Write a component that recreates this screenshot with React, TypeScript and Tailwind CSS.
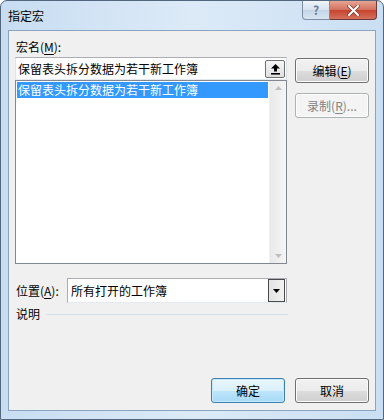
import React from 'react'

const font = { fontFamily: '"Noto Sans CJK SC", "Liberation Sans", sans-serif' }

function Btn({ children, primary, disabled }: { children: React.ReactNode; primary?: boolean; disabled?: boolean }) {
  const border = disabled ? 'border-[#adb2b5]' : primary ? 'border-[#3c7fb1]' : 'border-[#707070]'
  const bg = disabled
    ? 'bg-[#f4f4f4]'
    : primary
      ? 'bg-[linear-gradient(#eaf6fd_0%,#d9f0fc_50%,#bee6fd_50%,#a7d9f5_100%)]'
      : 'bg-[linear-gradient(#f2f2f2_0%,#ebebeb_50%,#dddddd_50%,#cfcfcf_100%)]'
  return (
    <div
      className={`flex h-[25px] w-[74px] items-center justify-center rounded-[3px] border text-[12px] ${border} ${bg} ${
        disabled ? 'text-[#838383]' : 'text-black'
      } ${primary ? 'shadow-[inset_0_0_0_1px_#c6e9fb]' : 'shadow-[inset_0_0_0_1px_#fcfcfc]'}`}
    >
      {children}
    </div>
  )
}

function U({ children }: { children: React.ReactNode }) {
  return <span className="underline underline-offset-2">{children}</span>
}

export default function App() {
  return (
    <div className="w-[384px] h-[420px] bg-white" style={font}>
      <div className="relative flex h-[420px] w-[384px] flex-col rounded-t-[7px] border border-[#52667d] bg-[linear-gradient(90deg,#c8ddf2,#dceaf7_50%,#cadff3)]">
        {/* title bar */}
        <div className="flex h-[29px] items-start justify-between pl-[7px] pr-[6px]">
          <span className="mt-[8px] text-[12px] leading-[14px] text-black">指定宏</span>
          <div className="flex">
            <div className="flex h-[19px] w-[28px] items-center justify-center rounded-bl-[4px] border border-t-0 border-[#7d8ea3] bg-[linear-gradient(#eef4fa,#d6e2ef_50%,#c5d5e6_50%,#d7e4f1)] text-[12px] font-bold leading-none text-[#6a7b8f]">
              ?
            </div>
            <div className="flex h-[19px] w-[47px] items-center justify-center rounded-br-[4px] border border-l-0 border-t-0 border-[#6d3a3a] bg-[linear-gradient(#e8a493,#d2705c_50%,#c7432b_50%,#d4715e)]">
              <svg width="13" height="11" viewBox="0 0 13 11">
                <path d="M2 1 L11 10 M11 1 L2 10" stroke="#7a3a30" strokeWidth="3.4" strokeLinecap="square" />
                <path d="M2 1 L11 10 M11 1 L2 10" stroke="#ffffff" strokeWidth="2" strokeLinecap="square" />
              </svg>
            </div>
          </div>
        </div>

        {/* client area */}
        <div className="mx-[7px] flex h-[381px] flex-col border border-[#8aa3bf] bg-[#f0f0f0] px-[6px] pt-[9px] text-[12px] leading-[14px] text-black">
          <div className="ml-[1px]">
            宏名(<U>M</U>):
          </div>
          <div className="mt-[3px] flex gap-[8px]">
            <div className="flex w-[272px] flex-col">
              {/* text box */}
              <div className="flex h-[23px] items-center border border-[#abadb3] border-b-[#e3e9ef] border-l-[#e2e3ea] border-r-[#dbdfe6] bg-white pl-[2px] pr-[1px]">
                <span className="flex-1">保留表头拆分数据为若干新工作簿</span>
                <div className="flex h-[18px] w-[20px] items-center justify-center rounded-[2px] border border-[#707070] bg-[linear-gradient(#f6f6f6,#e0e0e0)]">
                  <svg width="11" height="12" viewBox="0 0 11 12">
                    <path d="M5.5 1 L10 5.5 H7 V8.5 H4 V5.5 H1 Z" fill="#000" />
                    <rect x="1" y="10" width="9" height="1.6" fill="#000" />
                  </svg>
                </div>
              </div>
              {/* list */}
              <div className="flex h-[184px] border border-[#828790] bg-white">
                <div className="flex-1 p-[1px]">
                  <div className="flex h-[16px] items-center bg-[#3399ff] pl-[1px] text-white">保留表头拆分数据为若干新工作簿</div>
                </div>
                <div className="flex w-[17px] flex-col items-center justify-between border-l border-[#f0f0f0] bg-[linear-gradient(90deg,#e9e9e9,#f5f5f5)] py-[5px]">
                  <svg width="7" height="4" viewBox="0 0 7 4">
                    <path d="M0 4 L3.5 0 L7 4 Z" fill="#bfbfbf" />
                  </svg>
                  <svg width="7" height="4" viewBox="0 0 7 4">
                    <path d="M0 0 L3.5 4 L7 0 Z" fill="#bfbfbf" />
                  </svg>
                </div>
              </div>
            </div>
            <div className="mt-[1px] flex flex-col gap-[10px]">
              <Btn>
                编辑(<U>E</U>)
              </Btn>
              <Btn disabled>
                录制(<U>R</U>)...
              </Btn>
            </div>
          </div>

          {/* location */}
          <div className="mt-[14px] flex w-[272px] items-center">
            <span className="ml-[1px] w-[51px]">
              位置(<U>A</U>):
            </span>
            <div className="flex h-[25px] flex-1 items-center border border-[#abadb3] border-b-[#e3e9ef] bg-white pl-[3px] pr-[1px]">
              <span className="flex-1">所有打开的工作簿</span>
              <div className="flex h-[23px] w-[17px] items-center justify-center border border-[#4a4a4a] bg-[linear-gradient(90deg,#e3e3e3,#f2f2f2)]">
                <svg width="7" height="4" viewBox="0 0 7 4">
                  <path d="M0 0 L3.5 4 L7 0 Z" fill="#000" />
                </svg>
              </div>
            </div>
          </div>

          {/* description */}
          <div className="mt-[4px] flex w-[273px] items-center">
            <span className="ml-[1px]">说明</span>
            <div className="ml-[6px] mt-[1px] h-[2px] flex-1 border-t border-[#d5dfe5] border-b-white" />
          </div>

          <div className="mt-auto mb-[7px] flex justify-end gap-[10px]">
            <Btn primary>确定</Btn>
            <Btn>取消</Btn>
          </div>
        </div>
        <div className="flex-1" />
      </div>
    </div>
  )
}
